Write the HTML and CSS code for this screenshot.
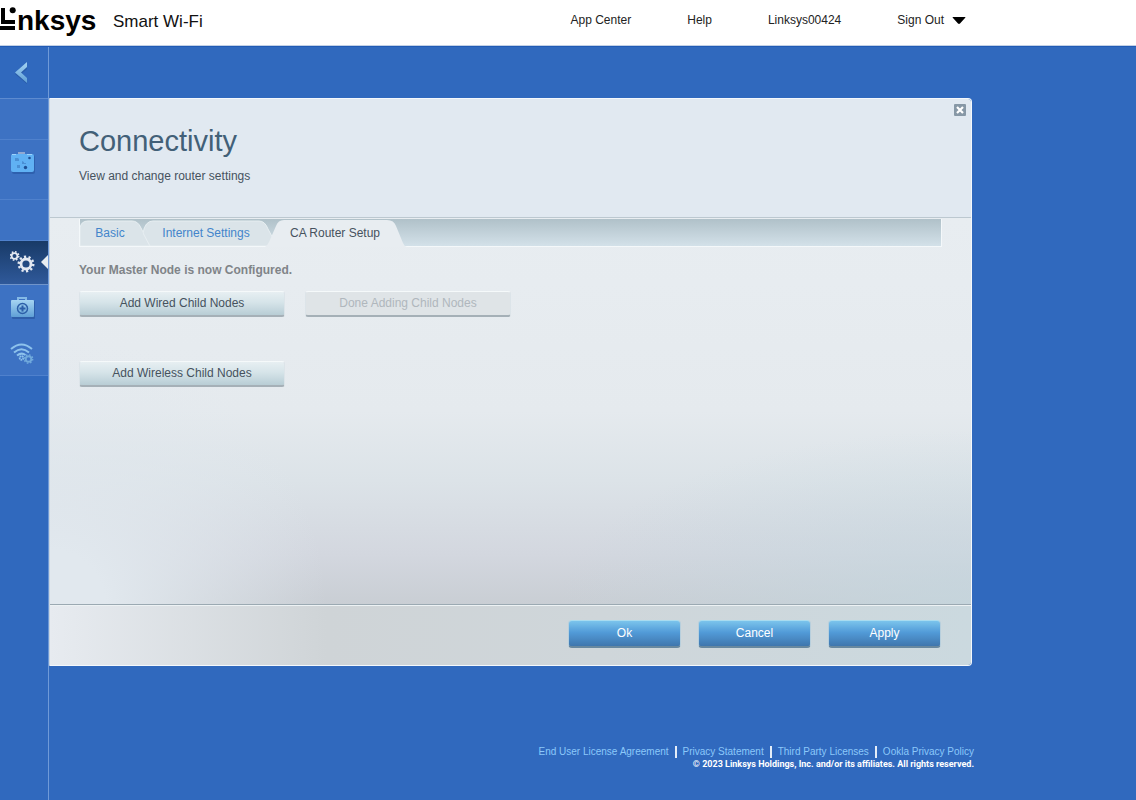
FILE: index.html
```html
<!DOCTYPE html>
<html lang="en">
<head>
    <meta charset="UTF-8">
    <meta name="viewport" content="width=device-width, initial-scale=1.0">
    <title>Linksys Smart Wi-Fi</title>
    <link rel="stylesheet" href="styles.css">
</head>
<body>
    <header class="top-bar">
        <div class="top-inner">
            <div class="brand">
                <svg class="logo" width="98" height="40" viewBox="0 0 98 40" role="img" aria-label="Linksys">
                    <path d="M1 8h4v12h10v4H1z M0 26h15v4H0z"/>
                    <circle cx="12.700" cy="10.300" r="3"/>
                    <text x="17" y="30">nksys</text>
                </svg>
                <span class="product">Smart Wi-Fi</span>
            </div>
            <nav class="top-nav">
                <a href="#">App Center</a>
                <a href="#">Help</a>
                <a href="#">Linksys00424</a>
                <a href="#" class="sign-out">Sign Out
                    <svg width="14" height="8" viewBox="0 0 14 8"><path d="M1 1h12q1 0 0 1L8 7.500q-1 .8-2 0L1 2q-1-1 0-1z"/></svg>
                </a>
            </nav>
        </div>
    </header>

    <div class="layout">
        <nav class="sidebar">
            <a href="#" class="side-item back" aria-label="Back">
                <svg width="14" height="24" viewBox="0 0 14 24">
                    <defs>
                        <linearGradient id="ice" x1="0" y1="0" x2="0" y2="1">
                            <stop offset="0" stop-color="#a5d4f2"/>
                            <stop offset="1" stop-color="#5f9fd6"/>
                        </linearGradient>
                    </defs>
                    <path d="M12 3v5L6 13l6 5v5L0 13z" fill="#24519a" opacity=".6"/>
                    <path d="M12 1v5L6 11.500l6 5.500v5L0 11.500z" fill="url(#ice)"/>
                </svg>
            </a>
            <div class="side-item spacer"></div>
            <a href="#" class="side-item widgets" aria-label="Devices">
                <svg width="26" height="24" viewBox="0 0 26 24">
                    <rect x="2" y="4" width="23" height="19" rx="2" fill="#2555a0" opacity=".6"/>
                    <path d="M8 3V1h7v2z" fill="#91a9d2"/>
                    <rect x="1" y="3" width="23" height="18" rx="2" fill="#60b1f4"/>
                    <path d="M2 3h4v1H2zM17 3h5v1h-5z" fill="#9bd3fc"/>
                    <path d="M5 7h3l1 1v2H5zM7 14h3v3H7zM12 10l2 1v2h-2zM14 12h2v1h-2z" fill="#4a8fd4"/>
                    <circle cx="15.500" cy="16.500" r="1.700" fill="#1e4f94"/>
                    <circle cx="19.500" cy="7" r="1.300" fill="#1e4f94"/>
                </svg>
            </a>
            <div class="side-item spacer"></div>
            <a href="#" class="side-item active" aria-label="Router settings">
                <svg width="26" height="24" viewBox="0 0 26 24" fill="none" stroke="#e4e9f2">
                    <circle cx="4.500" cy="5" r="2.900" stroke-width="1.800"/>
                    <circle cx="4.500" cy="5" r="4.200" stroke-width="1.600" stroke-dasharray="1.600 1.699"/>
                    <circle cx="16" cy="13" r="5" stroke-width="2.800"/>
                    <circle cx="16" cy="13" r="7.300" stroke-width="2.400" stroke-dasharray="2.200 2.387"/>
                </svg>
            </a>
            <a href="#" class="side-item tool" aria-label="Troubleshooting">
                <svg width="26" height="24" viewBox="0 0 26 24">
                    <rect x="2" y="5" width="23" height="18" rx="1" fill="#24519a" opacity=".6"/>
                    <path d="M8 4V2h8v2" fill="none" stroke="#84b9e6" stroke-width="2"/>
                    <rect x="1" y="4" width="23" height="17" rx="1" fill="url(#ice)"/>
                    <circle cx="12.500" cy="12.500" r="5" fill="none" stroke="#2c5fa8" stroke-width="1.500"/>
                    <path d="M12.500 9.500v6M9.500 12.500h6" stroke="#2c5fa8" stroke-width="2"/>
                </svg>
            </a>
            <a href="#" class="side-item tool" aria-label="Wireless">
                <svg width="26" height="24" viewBox="0 0 26 24" fill="none" stroke="#8dc2ec">
                    <path d="M1 8q10.500-9 21 0M4 11.500q7.500-6.500 15 0M7 14.500q4.500-3.500 8.500-.5" stroke-width="2"/>
                    <circle cx="11.500" cy="17" r="1.800" stroke-width="1.800" stroke-dasharray="1.500 .5"/>
                    <circle cx="18.500" cy="18" r="2.800" stroke="#70a9dc" stroke-width="1.900"/>
                    <circle cx="18.500" cy="18" r="4.200" stroke="#70a9dc" stroke-width="1.400" stroke-dasharray="1.600 1.699"/>
                </svg>
            </a>
        </nav>

        <main class="content">
            <section class="panel">
                <div class="panel-head">
                    <div>
                        <h1>Connectivity</h1>
                        <p>View and change router settings</p>
                    </div>
                    <button class="close" aria-label="Close">
                        <svg width="12" height="12" viewBox="0 0 12 12"><path d="M3 3l6 6M9 3l-6 6" stroke="#fff" stroke-width="2.200"/></svg>
                    </button>
                </div>

                <div class="panel-body">
                    <nav class="tabs">
                        <a href="#" class="tab basic">
                            <svg viewBox="0 0 70 27" width="70" height="27"><path d="M0 27V9Q1 2 8 2H52Q58 2 61 9L70 27z"/></svg>
                            <span>Basic</span>
                        </a>
                        <a href="#" class="tab internet">
                            <svg viewBox="0 0 134 27" width="134" height="27"><path d="M7 27L0 14Q2 2 10 2H116Q122 2 125 10L134 27z"/></svg>
                            <span>Internet Settings</span>
                        </a>
                        <a href="#" class="tab current">
                            <svg viewBox="0 0 142 28" width="142" height="28"><path d="M0 28Q2 27 4 23L11 7Q13 1 19 1H122Q129 1 131 7L138 24Q139 27 142 28z"/></svg>
                            <span>CA Router Setup</span>
                        </a>
                    </nav>
                    <p class="status">Your Master Node is now Configured.</p>
                    <div class="actions">
                        <button class="btn">Add Wired Child Nodes</button>
                        <button class="btn" disabled>Done Adding Child Nodes</button>
                    </div>
                    <div class="actions">
                        <button class="btn">Add Wireless Child Nodes</button>
                    </div>
                </div>

                <div class="panel-foot">
                    <button class="btn-primary">Ok</button>
                    <button class="btn-primary">Cancel</button>
                    <button class="btn-primary">Apply</button>
                </div>
            </section>

            <footer class="legal">
                <div class="legal-links">
                    <a href="#">End User License Agreement</a>
                    <a href="#">Privacy Statement</a>
                    <a href="#">Third Party Licenses</a>
                    <a href="#">Ookla Privacy Policy</a>
                </div>
                <p>© 2023 Linksys Holdings, Inc. and/or its affiliates. All rights reserved.</p>
            </footer>
        </main>
    </div>
</body>
</html>
```
FILE: styles.css
```css
* {
    box-sizing: border-box;
}

body {
    margin: 0;
    min-height: 100vh;
    display: flex;
    flex-direction: column;
    background: #3069be;
    font-family: "Liberation Sans", Arial, sans-serif;
    font-size: 12px;
    color: #46525e;
}

a {
    text-decoration: none;
}

button {
    font-family: inherit;
    cursor: pointer;
}

/* Top bar */
.top-bar {
    background: #fff;
    height: 46px;
    border-bottom: 1px solid #c3d1e6;
}

.top-inner {
    max-width: 966px;
    display: flex;
    justify-content: space-between;
}

.brand {
    display: flex;
    gap: 15px;
    color: #111;
}

.logo text {
    font-size: 28px;
    font-weight: bold;
}

.product {
    font-size: 17px;
    line-height: 44px;
}

.top-nav {
    display: flex;
    align-items: flex-start;
    gap: 56px;
    line-height: 40px;
}

.top-nav a {
    color: #222;
}

.sign-out {
    display: flex;
    align-items: center;
    gap: 8px;
}

/* Sidebar */
.layout {
    flex: 1;
    display: flex;
    border-top: 1px solid #215bb5;
}

.sidebar {
    width: 49px;
    flex-shrink: 0;
    border-right: 1px solid #6f9ad8;
}

.side-item {
    display: flex;
    align-items: center;
    padding-left: 10px;
    height: 45px;
    background: #3d72c3;
}

.side-item.back {
    height: 52px;
    padding-left: 15px;
    background: none;
    border-bottom: 1px solid #5d8bd0;
}

.side-item.spacer {
    height: 41px;
    border-bottom: 1px solid #4f81cd;
}

.side-item.widgets {
    height: 60px;
    padding-bottom: 14px;
    border-bottom: 1px solid #4f81cd;
}

.side-item.active {
    position: relative;
    height: 44px;
    background: linear-gradient(#183a67, #2f599a);
    border-bottom: 1px solid #7094ca;
}

.side-item.active::after {
    content: "";
    position: absolute;
    right: 0;
    top: 14px;
    border: 7px solid transparent;
    border-left: none;
    border-right-color: #e8edf1;
}

.side-item.tool:last-child {
    height: 46px;
    border-bottom: 1px solid #4f81cd;
}

/* Panel */
.content {
    flex: 1;
    max-width: 925px;
    padding-top: 51px;
}

.panel {
    margin-right: 2px;
    border: 1px solid #f4f8fc;
    border-left-color: #c8d4e0;
    border-radius: 0 4px 4px 0;
    overflow: hidden;
}

.panel-head {
    display: flex;
    justify-content: space-between;
    align-items: flex-start;
    min-height: 119px;
    padding: 5px 5px 0 29px;
    background: #e1e9f1;
    border-bottom: 1px solid #bcc8d0;
}

h1 {
    margin: 21px 0 12px;
    font-size: 29px;
    line-height: 32px;
    font-weight: normal;
    color: #426078;
}

.panel-head p {
    margin: 0;
}

.close {
    display: flex;
    padding: 0;
    border: none;
    border-radius: 1px;
    background: #8798a6;
}

.panel-body {
    min-height: 386px;
    padding: 1px 29px 0;
    background:
        radial-gradient(ellipse 45% 45% at 100% 100%, rgba(196, 215, 223, 0.7), transparent),
        radial-gradient(ellipse 30% 70% at 0 100%, #e1e8ee 20%, transparent),
        linear-gradient(#e8edf1, #e5eaee 50%, #dce3e8 68%, #d3d7df 87%, #c9ced4);
}

.tabs {
    display: flex;
    height: 28px;
    border: 1px solid #f4f8fa;
    border-top: none;
    background: linear-gradient(#b0c1c9, #d3e1e9);
}

.tab {
    position: relative;
    color: #4385cb;
    line-height: 28px;
}

.tab svg {
    display: block;
    fill: #dbe4e9;
    stroke: #e7eef1;
}

.tab span {
    position: absolute;
    inset: 0;
    text-align: center;
}

.tab.basic span {
    padding-right: 10px;
}

.tab.internet {
    margin-left: -7px;
}

.tab.internet span {
    padding-right: 8px;
}

.tab.current {
    margin-left: -12px;
    color: #46525e;
}

.tab.current span {
    padding-right: 2px;
}

.tab.current svg {
    fill: #e8edf1;
    stroke: none;
}

.status {
    margin: 16px 0 14px;
    line-height: 14px;
    font-weight: bold;
    color: #808488;
}

.actions {
    display: flex;
    gap: 20px;
    margin-bottom: 44px;
}

.btn {
    width: 206px;
    height: 26px;
    padding: 0 0 2px;
    border: 1px solid #dce4e9;
    border-top-color: #f5f9fa;
    border-bottom: 2px solid #a5b0b7;
    border-radius: 3px;
    background: linear-gradient(#e7eff2, #d6e4e9 45%, #b8cdd5);
    font-size: 12px;
    color: #46525e;
}

.btn:disabled {
    background: #dfe4e7;
    color: #b0b7bd;
    cursor: default;
}

.panel-foot {
    display: flex;
    justify-content: flex-end;
    align-items: flex-start;
    gap: 17px;
    min-height: 61px;
    padding: 15px 30px 0;
    border-top: 1px solid #9ba9b2;
    box-shadow: inset 0 1px #edf2f4;
    background: linear-gradient(to right, #e7ebf0, #cfd4d7 30%, #cfd6da 60%, #cbd9df);
}

.btn-primary {
    width: 113px;
    height: 28px;
    padding: 0 0 2px;
    border: 1px solid #b7cfdd;
    border-top-color: #a9dcf0;
    border-bottom: 2px solid #68889f;
    border-radius: 4px;
    background: linear-gradient(#7bc4ec, #529bd8 45%, #3f76ad);
    font-size: 12px;
    color: #fff;
}

/* Legal links */
.legal {
    margin-top: 80px;
    text-align: right;
}

.legal-links {
    display: flex;
    justify-content: flex-end;
    font-size: 10px;
    line-height: 12px;
}

.legal-links a {
    color: #8bc8fa;
}

.legal-links a + a {
    margin-left: 6px;
    padding-left: 6px;
    border-left: 2px solid #e4edf8;
}

.legal p {
    margin: 0;
    font-family: Roboto, "Liberation Sans", sans-serif;
    font-size: 9px;
    line-height: 12px;
    font-weight: bold;
    color: #fff;
}
```
